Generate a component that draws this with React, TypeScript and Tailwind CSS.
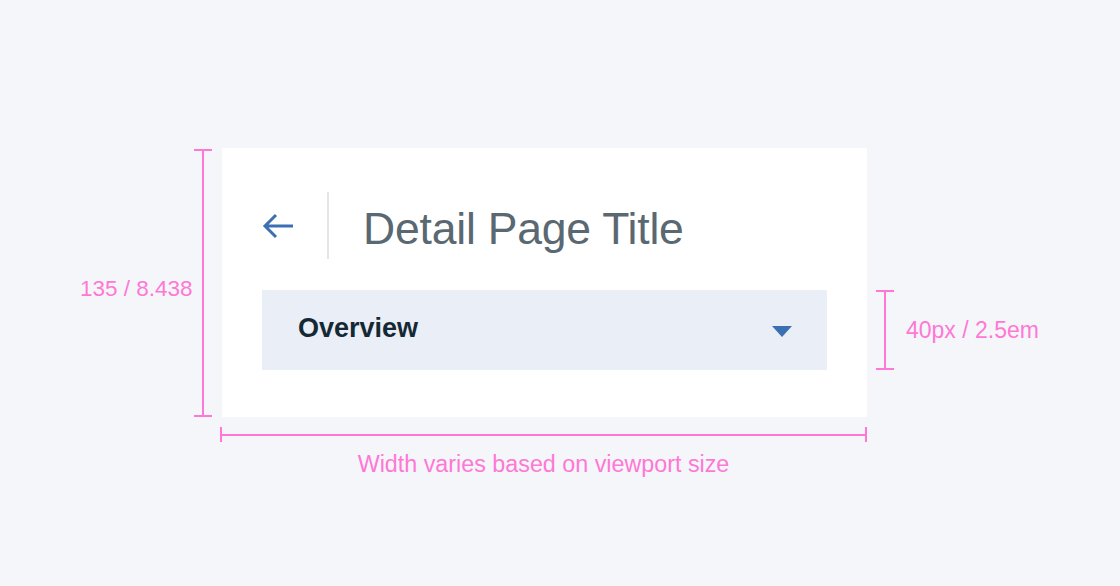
import React from 'react';

const pink = 'text-[#ff78d6]';

const VMeasure: React.FC<{ h: string }> = ({ h }) => (
  <div className={`flex flex-col items-center w-[18px] ${h}`}>
    <div className="w-full h-[2px] bg-[#ff78d6]" />
    <div className="flex-1 w-[2px] bg-[#ff78d6]" />
    <div className="w-full h-[2px] bg-[#ff78d6]" />
  </div>
);

const App: React.FC = () => {
  return (
    <div
      className="w-[1120px] h-[586px] bg-[#f4f6fa] overflow-hidden pt-[148px]"
      style={{ fontFamily: '"Liberation Sans", Arial, sans-serif' }}
    >
      <div className="flex items-start">
        {/* left measure */}
        <div className="flex items-center h-[269px] pl-[80px]">
          <div className={`w-[114px] pt-[14px] text-[22.5px] leading-none ${pink}`}>135 / 8.438</div>
          <VMeasure h="h-[268px]" />
        </div>

        {/* card */}
        <div className="ml-[10px] w-[645px] h-[269px] bg-white px-[40px] pt-[44px]">
          <div className="flex items-center h-[67px]">
            <svg width="32" height="28" viewBox="0 0 32 28" className="shrink-0">
              <path d="M31 14H3M14 3L3 14l11 11" fill="none" stroke="#3d70b2" strokeWidth="3" />
            </svg>
            <div className="ml-[33px] w-[2px] h-[67px] bg-[#e3e5e8]" />
            <h1 className="ml-[34px] mt-[7px] text-[44.5px] leading-none text-[#5a6872] font-normal tracking-[-0.2px]">
              Detail Page Title
            </h1>
          </div>
          <div className="mt-[31px] h-[80px] bg-[#eaeef6] flex items-center justify-between pl-[36px] pr-[35px]">
            <span className="text-[27px] font-bold text-[#152935] leading-none mb-[3px]">Overview</span>
            <svg width="20" height="11" viewBox="0 0 20 11" className="mt-[3px]">
              <path d="M0 0h20L10 11z" fill="#3d70b2" />
            </svg>
          </div>
        </div>

        {/* right measure */}
        <div className="ml-[9px] mt-[142px] flex items-center h-[80px]">
          <VMeasure h="h-[80px]" />
          <span className={`ml-[12px] text-[23px] leading-none ${pink}`}>40px / 2.5em</span>
        </div>
      </div>

      {/* bottom measure */}
      <div className="ml-[220px] w-[647px] mt-[10px] flex flex-col items-center">
        <div className="w-full h-[15px] flex items-center">
          <div className="w-[2px] h-[15px] bg-[#ff78d6]" />
          <div className="flex-1 h-[2px] bg-[#ff78d6]" />
          <div className="w-[2px] h-[15px] bg-[#ff78d6]" />
        </div>
        <div className={`mt-[11px] text-[23.3px] leading-none ${pink}`}>Width varies based on viewport size</div>
      </div>
    </div>
  );
};

export default App;
